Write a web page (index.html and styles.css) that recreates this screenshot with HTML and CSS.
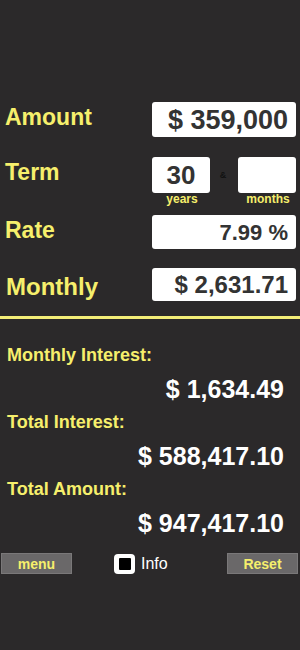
FILE: index.html
```html
<!DOCTYPE html>
<html lang="en">
<head>
    <meta charset="UTF-8">
    <meta name="viewport" content="width=device-width, initial-scale=1.0">
    <title>Mortgage Calculator</title>
    <link rel="stylesheet" href="styles.css">
</head>
<body>
    <div class="calculator">
        <div class="inputs">
            <div class="row row-amount">
                <div class="label">Amount</div>
                <div class="field field-amount">$ 359,000</div>
            </div>

            <div class="row row-term">
                <div class="label">Term</div>
                <div class="term">
                    <div class="field field-term">30</div>
                    <div class="amp">&amp;</div>
                    <div class="field field-term"></div>
                    <div class="unit">years</div>
                    <div></div>
                    <div class="unit">months</div>
                </div>
            </div>

            <div class="row row-rate">
                <div class="label">Rate</div>
                <div class="field field-rate">7.99 %</div>
            </div>

            <div class="row row-monthly">
                <div class="label label-monthly">Monthly</div>
                <div class="field field-monthly">$ 2,631.71</div>
            </div>
        </div>

        <div class="divider"></div>

        <div class="results">
            <div class="result-label">Monthly Interest:</div>
            <div class="result-value">$ 1,634.49</div>
            <div class="result-label">Total Interest:</div>
            <div class="result-value">$ 588,417.10</div>
            <div class="result-label">Total Amount:</div>
            <div class="result-value">$ 947,417.10</div>
        </div>

        <div class="toolbar">
            <div class="button">menu</div>
            <div class="info">
                <div class="checkbox"><div class="checkbox-mark"></div></div>
                <span>Info</span>
            </div>
            <div class="button button-reset">Reset</div>
        </div>
    </div>
</body>
</html>
```

FILE: styles.css
```css
body {
    margin: 0;
    background-color: #2b292a;
    font-family: "Liberation Sans", Arial, sans-serif;
    width: 300px;
    height: 650px;
    overflow: hidden;
}

.calculator {
    display: flex;
    flex-direction: column;
}

.inputs {
    padding-top: 102px;
    display: flex;
    flex-direction: column;
}

.row {
    display: flex;
    justify-content: space-between;
    align-items: flex-start;
    padding: 0 4px 0 5px;
}

.label {
    color: #f6ef6c;
    font-weight: bold;
    font-size: 23px;
    line-height: 23px;
    padding-top: 4px;
}

.label-monthly {
    font-size: 24px;
    line-height: 24px;
    padding-top: 7px;
    padding-left: 1px;
}

.field {
    background-color: #fff;
    border-radius: 3px;
    color: #333;
    font-weight: bold;
    text-align: right;
    box-sizing: border-box;
    display: flex;
    align-items: center;
    justify-content: flex-end;
    padding-right: 8px;
}

.field-amount {
    width: 144px;
    height: 35px;
    font-size: 27px;
    padding-top: 1px;
}

.row-term {
    margin-top: 20px;
}

.term {
    width: 144px;
    display: grid;
    grid-template-columns: 58px 1fr 58px;
    align-items: center;
}

.field-term {
    height: 36px;
    font-size: 26px;
    justify-content: center;
    padding: 1px 0 0 0;
}

.amp {
    color: #111;
    font-weight: bold;
    font-size: 9px;
    text-align: center;
    padding-right: 2px;
}

.unit {
    color: #f6ef6c;
    font-weight: bold;
    font-size: 12px;
    line-height: 12px;
    text-align: center;
    padding-left: 2px;
}

.row-rate {
    margin-top: 10px;
}

.field-rate {
    width: 144px;
    height: 34px;
    font-size: 22px;
    padding-top: 1px;
}

.row-monthly {
    margin-top: 19px;
}

.field-monthly {
    width: 144px;
    height: 33px;
    font-size: 24px;
    padding-top: 1px;
}

.divider {
    margin-top: 15px;
    height: 3px;
    background-color: #f3ee78;
}

.results {
    display: flex;
    flex-direction: column;
    padding-top: 27px;
}

.result-label {
    color: #f6ef6c;
    font-weight: bold;
    font-size: 18px;
    line-height: 18px;
    padding-left: 7px;
    margin-bottom: 13px;
}

.result-value {
    color: #fff;
    font-weight: bold;
    font-size: 25px;
    line-height: 25px;
    text-align: right;
    padding-right: 16px;
    margin-bottom: 11px;
}

.toolbar {
    display: flex;
    align-items: center;
    padding: 0 2px 0 1px;
    margin-top: 6px;
}

.button {
    width: 71px;
    height: 21px;
    box-sizing: border-box;
    background-color: #6a6869;
    border: 1px solid #7a7879;
    color: #f6ef6c;
    font-weight: bold;
    font-size: 14px;
    display: flex;
    align-items: center;
    justify-content: center;
}

.button-reset {
    margin-left: auto;
}

.info {
    display: flex;
    align-items: center;
    gap: 6px;
    margin-left: 42px;
    color: #fff;
    font-size: 16px;
}

.checkbox {
    width: 21px;
    height: 20px;
    background-color: #fff;
    border-radius: 4px;
    display: flex;
    align-items: center;
    justify-content: center;
}

.checkbox-mark {
    width: 12px;
    height: 12px;
    background-color: #000;
    border-radius: 1px;
}
```
